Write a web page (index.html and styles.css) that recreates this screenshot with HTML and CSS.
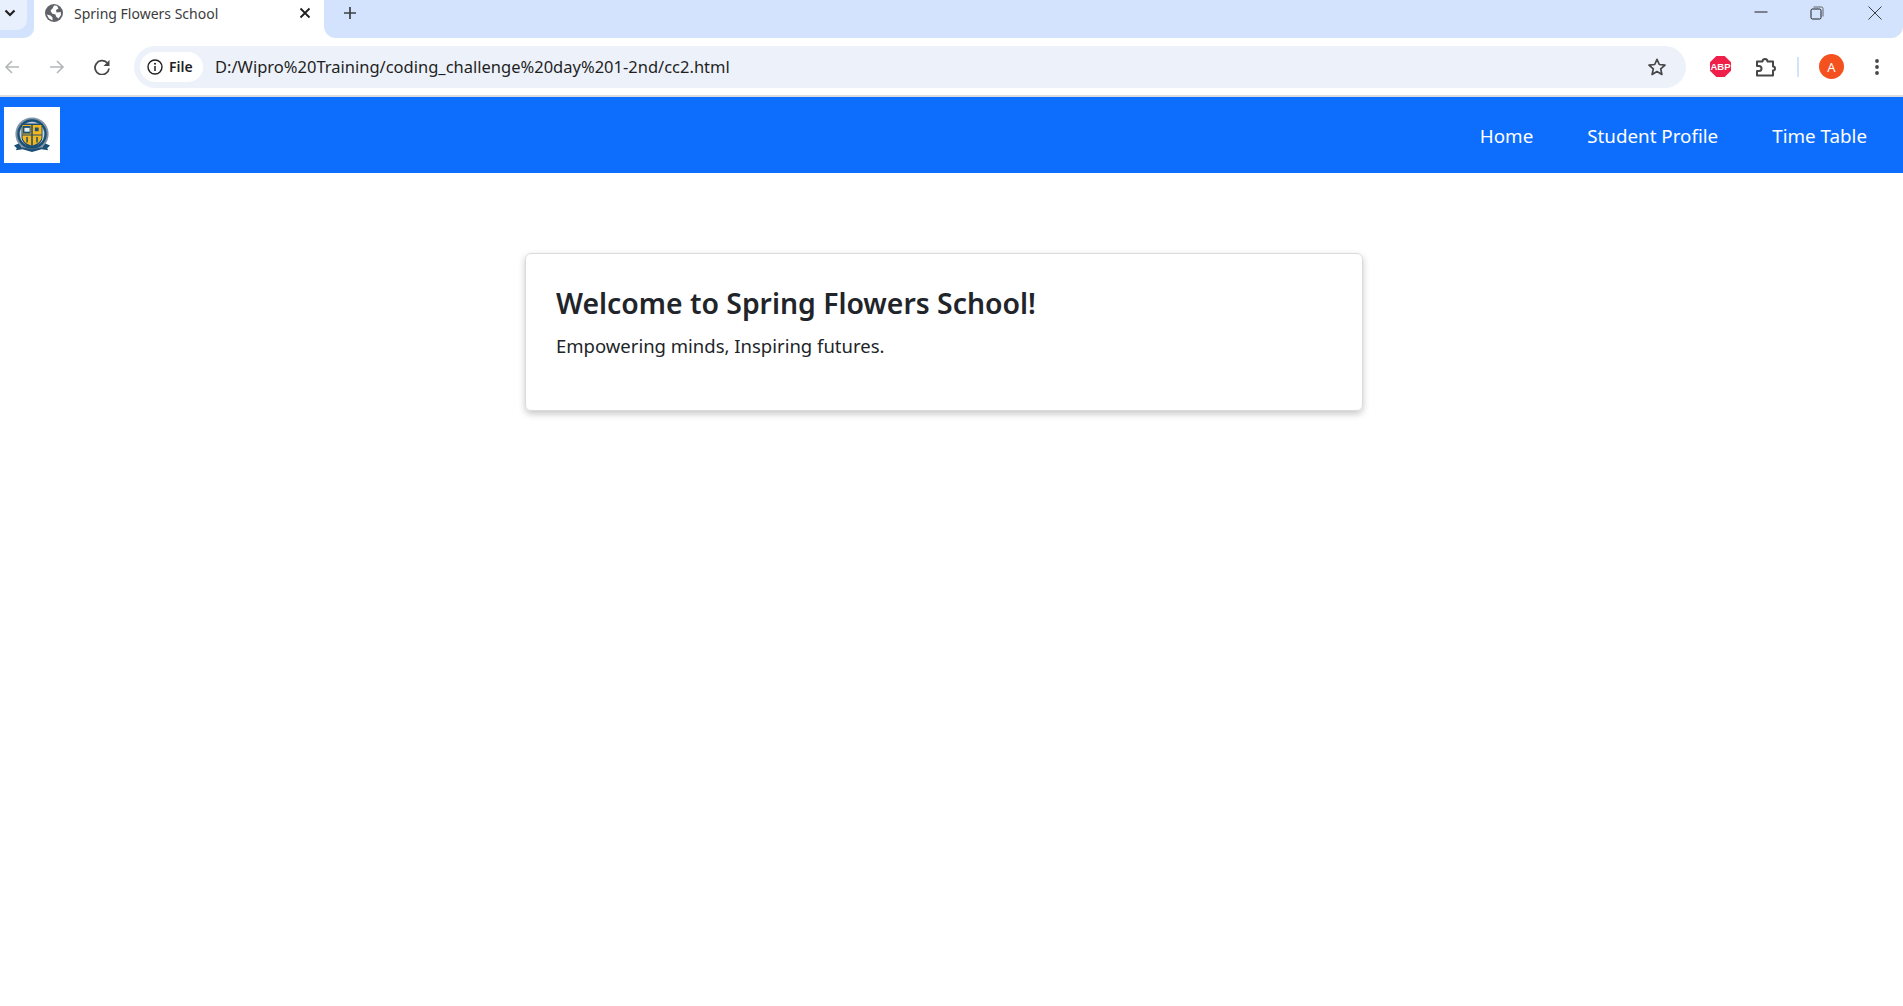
FILE: index.html
```html
<!DOCTYPE html>
<html lang="en">
<head>
<meta charset="utf-8">
<title>Spring Flowers School</title>
<link rel="stylesheet" href="styles.css">
</head>
<body>
<div class="tabstrip">
  <div class="stripleft">
    <div class="tabsearch">
      <svg class="ico16" viewBox="0 0 16 16"><path d="M3.500 5.500 8 10l4.500-4.500" fill="none" stroke="#1f1f1f" stroke-width="2.200"/></svg>
    </div>
  </div>
  <div class="tab">
    <svg class="favicon" viewBox="0 0 18 18"><circle cx="9" cy="9" r="9" fill="#5f6368"/><path d="M9 1.500 12 1.800 13.500 4.500 11 6 11.500 8.500 15.800 8 16 11 13.500 14.500 11 12.500 10.500 10.500 7 9.500 5.500 6.500 7.500 4.500ZM1.800 10.500 5.500 11.500 7.500 13.500 7.500 16.500 4 14.500Z" fill="#fff"/></svg>
    <span class="tabtitle">Spring Flowers School</span>
    <svg class="tabclose" viewBox="0 0 12 12"><path d="M1.500 1.500l9 9M10.500 1.500l-9 9" stroke="#1f1f1f" stroke-width="1.800"/></svg>
  </div>
  <div class="stripright">
    <svg class="newtab" viewBox="0 0 14 14"><path d="M7 1v12M1 7h12" stroke="#3c4043" stroke-width="1.700"/></svg>
    <div class="winctrls">
      <svg class="winbtn" viewBox="0 0 14 14"><path d="M0.500 6h13" stroke="#1f1f1f" stroke-width="1"/></svg>
      <svg class="winbtn" viewBox="0 0 14 14"><rect x="1" y="3" width="10" height="10" rx="1.500" fill="none" stroke="#1f1f1f" stroke-width="1"/><path d="M3.500 1h8a1.500 1.500 0 0 1 1.500 1.500v8" fill="none" stroke="#5f6368" stroke-width="1"/></svg>
      <svg class="winbtn winclose" viewBox="0 0 14 14"><path d="M0.500 0.500l13 13M13.500 0.500l-13 13" stroke="#3c4043" stroke-width="1"/></svg>
    </div>
  </div>
</div>
<div class="toolbar">
  <svg class="navico navfirst" viewBox="0 0 16 16"><path d="M15 8H2M8 2 2 8l6 6" fill="none" stroke="#b4b6b8" stroke-width="1.600"/></svg>
  <svg class="navico" viewBox="0 0 16 16"><path d="M1 8h13M8 2l6 6-6 6" fill="none" stroke="#b4b6b8" stroke-width="1.600"/></svg>
  <svg class="navico" viewBox="0 0 16 16"><path d="M15 9.500A7 7 0 1 1 13 3.700" fill="none" stroke="#474747" stroke-width="1.800"/><path d="M15.500 1v6H9.500z" fill="#474747"/></svg>
  <div class="omnibox">
    <div class="chip">
      <svg class="infoico" viewBox="0 0 16 16"><circle cx="8" cy="8" r="7" fill="none" stroke="#1f1f1f" stroke-width="1.400"/><path d="M8 7v5" stroke="#1f1f1f" stroke-width="1.500"/><circle cx="8" cy="4.700" r="1" fill="#1f1f1f"/></svg>
      <span class="chiptext">File</span>
    </div>
    <span class="url">D:/Wipro%20Training/coding_challenge%20day%201-2nd/cc2.html</span>
    <svg class="star" viewBox="0 0 20 20"><path d="M10 2.300l2.300 5.200 5.700.6-4.300 3.800 1.200 5.600L10 14.600l-4.900 2.900 1.200-5.600L2 8.100l5.700-.6z" fill="none" stroke="#474747" stroke-width="1.700" stroke-linejoin="round"/></svg>
  </div>
  <div class="abp"><span class="abptext">ABP</span></div>
  <svg class="puzzle" viewBox="0 0 22 22"><path d="M2 5.500h5.500a2.500 2.500 0 0 1 5 0H18v5a2 2 0 0 1 0 4v5H2v-4.500h2a2.500 2.500 0 0 0 0-5H2z" fill="none" stroke="#474747" stroke-width="2" stroke-linejoin="round"/></svg>
  <div class="sep"></div>
  <div class="avatar">A</div>
  <svg class="kebab" viewBox="0 0 4 18"><circle cx="2" cy="3" r="1.900" fill="#474747"/><circle cx="2" cy="9" r="1.900" fill="#474747"/><circle cx="2" cy="15" r="1.900" fill="#474747"/></svg>
</div>
<nav class="navbar">
  <a class="brand">
    <svg class="crest" viewBox="0 0 40 40">
      <circle cx="20" cy="19" r="17.500" fill="#7f95a6"/>
      <circle cx="20" cy="19" r="15.500" fill="#1d4f74"/>
      <circle cx="20" cy="19" r="13" fill="#c8d3da"/>
      <path d="M9 8h22v14c0 6-5 9-11 12-6-3-11-6-11-12z" fill="#1d4f74"/>
      <path d="M20.800 9.500H30v10h-9.200zM10 20.500h9.200V31C14 29 10 26.500 10 22z" fill="#f5b81c"/>
      <path d="M10 9.500h9.200v10H10zM20.800 20.500H30V22c0 4.500-4 7-9.200 9z" fill="#f5b81c"/>
      <path d="M10.500 10.500h8v8h-8z" fill="#1d4f74"/>
      <path d="M12 12.500h5.500v4H12z" fill="#e8eef2"/>
      <path d="M14 22h1.600v6H14zM24.500 22h1.600v6h-1.600zM23 12h4v4h-4z" fill="#1d4f74"/>
      <path d="M1 31l5-2 3 4 11 2 11-2 3-4 5 2-3 3 1 2-7-1-10 3-10-3-7 1 1-2z" fill="#1d4f74"/>
    </svg>
  </a>
  <ul class="navlinks">
    <li><a class="navlink">Home</a></li>
    <li><a class="navlink">Student Profile</a></li>
    <li><a class="navlink">Time Table</a></li>
  </ul>
</nav>
<main class="content">
  <section class="card">
    <h1 class="cardtitle">Welcome to Spring Flowers School!</h1>
    <p class="cardtext">Empowering minds, Inspiring futures.</p>
  </section>
</main>
</body>
</html>
```
FILE: styles.css
```css
* { box-sizing: border-box; }
html, body { margin: 0; padding: 0; height: 100%; overflow: hidden; background: #fff; }
body { font-family: "Noto Sans", "Open Sans", sans-serif; color: #212529; }

.tabstrip { height: 38px; background: #fff; display: flex; align-items: stretch; }
.stripleft { width: 34px; flex: none; background: #d3e3fd; border-radius: 0 0 10px 0; }
.tabsearch { width: 27px; height: 30px; background: #e9f0fd; border-radius: 0 0 10px 0; display: flex; align-items: center; justify-content: center; padding: 0 7px 4px 0; }
.ico16 { width: 16px; height: 16px; }
.tab { width: 290px; flex: none; background: #fff; display: flex; align-items: center; padding: 0 0 12px 11px; }
.favicon { width: 18px; height: 18px; flex: none; }
.tabtitle { font-size: 14px; color: #3c3c3c; margin-left: 11px; width: 225px; white-space: nowrap; }
.tabclose { width: 12px; height: 12px; flex: none; }
.stripright { flex: 1; background: #d3e3fd; border-radius: 0 0 12px 12px; display: flex; align-items: flex-start; }
.newtab { width: 14px; height: 14px; margin: 6px 0 0 19px; flex: none; }
.winctrls { margin-left: auto; display: flex; gap: 42px; padding: 6px 21px 0 0; }
.winbtn { width: 14px; height: 14px; }
.winclose { margin-left: 2px; }

.toolbar { height: 57px; background: #fff; display: flex; align-items: center; }
.navico { width: 16px; height: 16px; margin-left: 29px; flex: none; }
.navfirst { margin-left: 4px; }
.omnibox { width: 1552px; height: 42px; margin-left: 24px; background: #edf2fa; border-radius: 21px; display: flex; align-items: center; padding: 0 19px 0 6px; flex: none; }
.chip { width: 63px; height: 30px; background: #fff; border-radius: 15px; display: flex; align-items: center; padding-left: 7px; flex: none; }
.infoico { width: 16px; height: 16px; flex: none; }
.chiptext { font-size: 14px; font-weight: 600; color: #1f1f1f; margin-left: 6px; }
.url { font-size: 16.500px; line-height: 24px; padding-top: 1px; color: #1f1f1f; margin-left: 12px; flex: 1; white-space: nowrap; }
.star { width: 20px; height: 20px; flex: none; }
.abp { width: 21px; height: 21px; margin-left: 24px; background: #f01f4a; clip-path: polygon(30% 0, 70% 0, 100% 30%, 100% 70%, 70% 100%, 30% 100%, 0 70%, 0 30%); display: flex; align-items: center; justify-content: center; flex: none; }
.abptext { font-family: "Liberation Sans", sans-serif; font-size: 9.500px; font-weight: 700; color: #fff; }
.puzzle { width: 22px; height: 22px; margin-left: 24px; flex: none; }
.sep { width: 2px; height: 20px; background: #d3e3fd; margin-left: 20px; flex: none; }
.avatar { width: 25px; height: 25px; border-radius: 50%; background: #f4511e; color: #fff; font-size: 13px; display: flex; align-items: center; justify-content: center; margin-left: 20px; flex: none; }
.kebab { width: 4px; height: 18px; margin-left: 31px; flex: none; }

.navbar { height: 78px; background: #0d6efd; border-top: 2px solid #dcdcdc; display: flex; align-items: center; justify-content: space-between; padding: 0 9px 0 4px; }
.brand { width: 56px; height: 56px; background: #fff; display: flex; align-items: center; justify-content: center; }
.crest { width: 38px; height: 38px; filter: blur(0.4px); }
.navlinks { display: flex; list-style: none; margin: 0; padding: 0; }
.navlink { display: block; padding: 9px 27px 7px; color: #fff; font-size: 18.800px; line-height: 28px; }

.content { display: flex; justify-content: center; padding: 80px 0 0 0; }
.card { width: 838px; height: 158px; margin-right: 15px; border: 1px solid #d9dcdf; border-radius: 6px; box-shadow: 0 3px 7px rgba(0, 0, 0, 0.22); padding: 30px; }
.cardtitle { margin: 0; font-size: 28.350px; font-weight: 600; line-height: 38px; color: #212529; }
.cardtext { margin: 10px 0 0; font-size: 18.500px; line-height: 28px; color: #212529; }
```
